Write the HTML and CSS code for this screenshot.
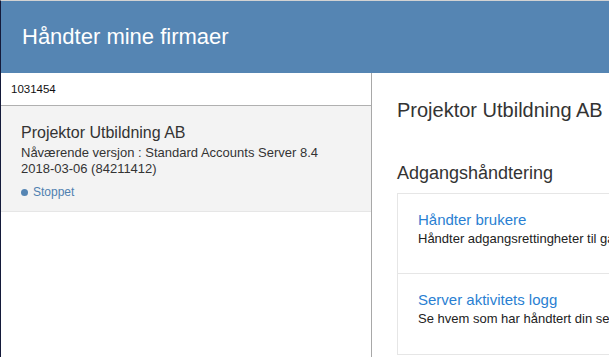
FILE: index.html
```html
<!DOCTYPE html>
<html lang="no">
<head>
  <meta charset="UTF-8" />
  <title>Håndter mine firmaer</title>
  <link rel="stylesheet" href="styles.css">
</head>
<body>
  <header class="top-bar">
    <h1>Håndter mine firmaer</h1>
  </header>

  <div class="main-wrapper">
    <div class="sidebar">
      <div class="search">1031454</div>
      <div class="company-item">
        <div class="company-name">Projektor Utbildning AB</div>
        <div class="company-version">Nåværende versjon : Standard Accounts Server 8.4<br>2018-03-06 (84211412)</div>
        <div class="company-status"><span class="dot"></span>Stoppet</div>
      </div>
    </div>

    <div class="main-content">
      <h2 class="company-title">Projektor Utbildning AB</h2>
      <h3 class="section-title">Adgangshåndtering</h3>
      <div class="card">
        <div class="card-row">
          <a class="card-link">Håndter brukere</a>
          <div class="card-desc">Håndter adgangsrettingheter til gamle og nye brukere</div>
        </div>
        <div class="card-row">
          <a class="card-link">Server aktivitets logg</a>
          <div class="card-desc">Se hvem som har håndtert din server</div>
        </div>
      </div>
    </div>
  </div>
</body>
</html>
```

FILE: styles.css
```css
body {
  margin: 0;
  font-family: "Liberation Sans", Arial, sans-serif;
  color: #333;
  background: #fff;
  height: 100vh;
  display: flex;
  flex-direction: column;
  border-left: 1px solid #141a3a;
  border-top: 1px solid #d2d2d2;
  box-sizing: border-box;
  overflow: hidden;
}

.top-bar {
  background-color: #5585b3;
  height: 72px;
  display: flex;
  align-items: center;
  padding-left: 21px;
  flex-shrink: 0;
}

.top-bar h1 {
  margin: 0;
  font-size: 22px;
  font-weight: normal;
  color: white;
}

.main-wrapper {
  display: flex;
  flex: 1;
  min-height: 0;
}

.sidebar {
  width: 370px;
  flex-shrink: 0;
  border-right: 1px solid #a8a8a8;
}

.search {
  height: 32px;
  line-height: 33px;
  padding-left: 10px;
  font-size: 11.5px;
  color: #111;
  border-bottom: 1px solid #b0b0b0;
}

.company-item {
  background: #f3f3f3;
  padding: 17px 20px 11px;
  border-bottom: 1px solid #e6e6e6;
}

.company-name {
  font-size: 16px;
  line-height: 20px;
}

.company-version {
  font-size: 13px;
  line-height: 16px;
  margin-top: 2px;
}

.company-status {
  font-size: 12px;
  line-height: 16px;
  color: #4f80b0;
  margin-top: 7px;
  display: flex;
  align-items: center;
}

.dot {
  width: 7px;
  height: 7px;
  border-radius: 50%;
  background: #5585b3;
  margin-right: 5px;
}

.main-content {
  flex: 1;
  padding-left: 25px;
  white-space: nowrap;
  overflow: hidden;
}

.company-title {
  margin: 24px 0 0;
  font-size: 20px;
  line-height: 26px;
  font-weight: normal;
}

.section-title {
  margin: 38px 0 0;
  font-size: 18px;
  line-height: 24px;
  font-weight: normal;
}

.card {
  margin-top: 8px;
  width: 360px;
  border: 1px solid #e6e6e6;
}

.card-row {
  height: 80px;
  box-sizing: border-box;
  padding: 15px 20px 0;
  border-bottom: 1px solid #e6e6e6;
}

.card-row:last-child {
  border-bottom: none;
}

.card-link {
  display: block;
  font-size: 15px;
  line-height: 21px;
  color: #2a7fd2;
  cursor: pointer;
}

.card-desc {
  font-size: 13px;
  line-height: 18px;
  color: #222;
}
```
